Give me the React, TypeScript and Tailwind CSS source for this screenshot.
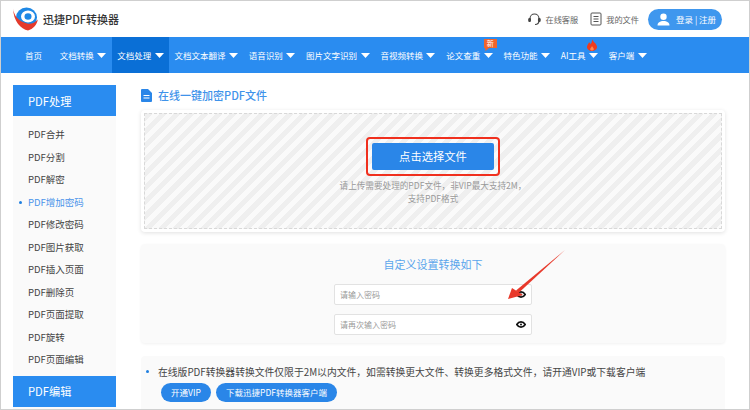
const font = { fontFamily: '"Noto Sans CJK SC", "Liberation Sans", sans-serif' };

function Caret() {
  return (
    <svg width="9" height="5" viewBox="0 0 9 5" className="shrink-0">
      <path d="M0 0H9L4.5 5Z" fill="#fff" />
    </svg>
  );
}

function Logo() {
  return (
    <svg width="25" height="24" viewBox="0 0 25 24" className="shrink-0">
      <ellipse cx="13.500" cy="10.500" rx="10.500" ry="10" fill="#1e88e5" />
      <ellipse cx="15" cy="9.500" rx="7" ry="6" fill="#fff" />
      <ellipse cx="15" cy="9.500" rx="3.500" ry="3.200" fill="#1e88e5" />
      <path d="M0.300 1.500C0.500 7 4 14 14 16.500 18 17.300 22 16 24.800 12.500 24 18 20 22 15 23.500 8 22 0 14 0.300 1.500Z" fill="#e53a2b" />
    </svg>
  );
}

function NavItem({ label, active, caret = true, children }: { label: string; active?: boolean; caret?: boolean; children?: React.ReactNode }) {
  return (
    <div className={`relative flex h-full items-center gap-[3.5px] pl-[5.5px] pr-[5.3px] ${active ? "bg-[#0a6fd6]" : ""}`}>
      <span className="whitespace-nowrap text-[8.5px] leading-none text-white">{label}</span>
      {caret && <Caret />}
      {children}
    </div>
  );
}

function SideItem({ label, active }: { label: string; active?: boolean }) {
  return (
    <div className={`relative h-[22.5px] pl-[15px] text-[9.5px] leading-[22.5px] ${active ? "text-[#4a94ea]" : "text-[#444]"}`}>
      {active && <span className="absolute left-[6px] top-[10px] size-[3px] rounded-full bg-[#1f7fe0]" />}
      {label}
    </div>
  );
}

function Eye() {
  return (
    <svg width="10" height="7" viewBox="0 0 10 7" className="shrink-0">
      <path d="M0.800 3.500C2 1.500 3.500 0.900 5 0.900S8 1.500 9.200 3.500C8 5.500 6.500 6.100 5 6.100S2 5.500 0.800 3.500Z" fill="none" stroke="#111" strokeWidth="1.700" />
      <circle cx="5" cy="3.500" r="1" fill="#111" />
    </svg>
  );
}

function PwInput({ placeholder }: { placeholder: string }) {
  return (
    <div className="flex h-[21px] w-[198px] items-center justify-between rounded-[2px] border border-[#e2e2e2] bg-white pl-[5px] pr-[5px]">
      <span className="text-[8px] text-[#999]">{placeholder}</span>
      <Eye />
    </div>
  );
}

const sideItems = ["PDF合并", "PDF分割", "PDF解密", "PDF增加密码", "PDF修改密码", "PDF图片获取", "PDF插入页面", "PDF删除页", "PDF页面提取", "PDF旋转", "PDF页面编辑"];

export default function App() {
  return (
    <div style={font} className="relative h-[410px] w-[750px] overflow-hidden border border-[#cfcfcf] bg-white">
      <header className="flex h-[36px] items-center pl-[12px] pr-[27px]">
        <Logo />
        <span className="ml-[5px] text-[11px] font-medium text-[#333]">迅捷PDF转换器</span>
        <div className="ml-auto flex items-center">
          <svg width="13" height="13" viewBox="0 0 13 13" fill="none" stroke="#444" strokeWidth="1.100">
            <path d="M2 7V5.500a4.500 4.500 0 0 1 9 0V7" />
            <path d="M11 7.500C11 10 9.500 11.500 7 11.500" />
            <rect x="0.800" y="5.500" width="1.600" height="3" rx="0.700" fill="#444" />
            <rect x="10.500" y="5.500" width="1.600" height="3" rx="0.700" fill="#444" />
          </svg>
          <span className="ml-[4px] text-[8.2px] text-[#666]">在线客服</span>
          <svg width="12" height="14" viewBox="0 0 12 14" fill="none" stroke="#555" strokeWidth="1" className="ml-[12px]">
            <rect x="1" y="1" width="10" height="12" rx="1" />
            <path d="M3.500 4.500H8.500M3.500 7H8.500M3.500 9.500H8.500" />
          </svg>
          <span className="ml-[4px] text-[8.2px] text-[#666]">我的文件</span>
          <div className="ml-[9px] flex h-[21px] w-[74px] items-center rounded-full bg-[#3f97ee] pl-[9px]">
            <svg width="13" height="13" viewBox="0 0 13 13" fill="#fff">
              <circle cx="6.500" cy="3.700" r="3.200" />
              <path d="M0.500 12.500C0.500 9.500 3 8 6.500 8S12.500 9.500 12.500 12.500Z" />
            </svg>
            <span className="ml-[6px] whitespace-nowrap text-[8.5px] text-white">登录 | 注册</span>
          </div>
        </div>
      </header>

      <nav className="flex h-[36px] items-center bg-[#2a8cf0] pl-[18.5px]">
        <NavItem label="首页" caret={false} />
        <div className="w-[7px]" />
        <NavItem label="文档转换" />
        <NavItem label="文档处理" active />
        <NavItem label="文档文本翻译" />
        <NavItem label="语音识别" />
        <NavItem label="图片文字识别" />
        <NavItem label="音视频转换" />
        <NavItem label="论文查重">
          <span className="absolute left-[43px] top-[2px] flex h-[9px] w-[13px] items-center justify-center bg-[#f0642c] text-[7px] leading-none text-white">新</span>
          <svg width="4" height="3" viewBox="0 0 4 3" className="absolute left-[44px] top-[11px]">
            <path d="M0 0H4L0.500 3Z" fill="#f0642c" />
          </svg>
        </NavItem>
        <NavItem label="特色功能" />
        <NavItem label="AI工具">
          <svg width="10" height="12" viewBox="0 0 10 12" className="absolute left-[32px] top-[2px]">
            <path d="M5 0C5.500 2.500 10 4.500 10 8 10 10.300 7.800 12 5 12S0 10.300 0 8C0 6 1.500 5 2 3.200 3 3.700 3.500 4.700 3.500 5.500 4.500 4 5.300 2.300 5 0Z" fill="#ee3b1d" />
            <path d="M5 7C5.800 8.300 6.800 9 6.800 10.200 6.800 11.100 6 11.600 5 11.600S3.200 11.100 3.200 10.200C3.200 9 4.500 8.300 5 7Z" fill="#ff8a50" />
          </svg>
        </NavItem>
        <NavItem label="客户端" />
      </nav>

      <div className="flex pl-[12px] pt-[12px]">
        <aside className="w-[103px] shrink-0 bg-[#fafafa]">
          <div className="flex h-[31px] items-center bg-[#2a8cf0] pl-[15px] pt-[1px] text-[11.2px] text-white">PDF处理</div>
          <div className="pb-[5px] pt-[7px]">
            {sideItems.map((s) => (
              <SideItem key={s} label={s} active={s === "PDF增加密码"} />
            ))}
          </div>
          <div className="flex h-[31px] items-center bg-[#2a8cf0] pl-[15px] pt-[1px] text-[11.2px] text-white">PDF编辑</div>
        </aside>

        <main className="ml-[25px] w-[584px] shrink-0">
          <div className="mt-[3px] flex h-[14px] items-center">
            <svg width="11" height="13" viewBox="0 0 11 13" className="shrink-0">
              <path d="M0 1a1 1 0 0 1 1-1H7L11 4V12a1 1 0 0 1-1 1H1a1 1 0 0 1-1-1Z" fill="#2a86e8" />
              <path d="M2.500 6.500H8.500M2.500 9H8.500" stroke="#fff" strokeWidth="1.100" />
            </svg>
            <span className="ml-[6px] text-[11px] font-medium text-[#3f93ea]">在线一键加密PDF文件</span>
          </div>

          <section className="mt-[8px] h-[122px] rounded-[4px] bg-white p-[3px] shadow-[0_1px_4px_rgba(0,0,0,0.12)]">
            <div className="flex h-full flex-col items-center border border-dashed border-[#d8d8d8] bg-[repeating-linear-gradient(135deg,#efefef_0,#efefef_5px,#fafafa_5px,#fafafa_10px)]">
              <div className="mt-[23px] rounded-[4px] border-2 border-[#f0301e] p-[4px]">
                <div className="flex h-[27px] w-[122px] items-center justify-center rounded-[2px] bg-[#2a86e8] text-[11.3px] text-white">点击选择文件</div>
              </div>
              <p className="mt-[3px] whitespace-nowrap text-center text-[8.6px] leading-[12.5px] text-[#999]">
                请上传需要处理的PDF文件，非VIP最大支持2M，
                <br />
                支持PDF格式
              </p>
            </div>
          </section>

          <section className="mt-[12px] flex h-[99px] flex-col items-center rounded-[4px] bg-[#fafafa] pt-[12px] shadow-[0_1px_3px_rgba(0,0,0,0.06)]">
            <div className="text-[11px] leading-[16px] text-[#5ba6ec]">自定义设置转换如下</div>
            <div className="mt-[12px]"><PwInput placeholder="请输入密码" /></div>
            <div className="mt-[9px]"><PwInput placeholder="请再次输入密码" /></div>
          </section>

          <section className="relative mt-[13px] h-[60px] rounded-[4px] bg-[#fafafa] pl-[17px] pt-[9px]">
            <span className="absolute left-[5px] top-[14px] size-[3px] rounded-full bg-[#1f7fe0]" />
            <p className="whitespace-nowrap text-[9.8px] leading-[14px] text-[#444]">在线版PDF转换器转换文件仅限于2M以内文件，如需转换更大文件、转换更多格式文件，请开通VIP或下载客户端</p>
            <div className="ml-[3px] mt-[4px] flex gap-[5px]">
              <span className="flex h-[19px] w-[50px] items-center justify-center rounded-full bg-[#2a86e8] text-[8.5px] text-white">开通VIP</span>
              <span className="flex h-[19px] w-[121px] items-center justify-center rounded-full bg-[#2a86e8] text-[8.5px] text-white">下载迅捷PDF转换器客户端</span>
            </div>
          </section>
        </main>
      </div>

      <svg width="60" height="60" viewBox="0 0 60 60" className="absolute left-[505px] top-[249px]">
        <path d="M59 0 L10 40.500 L12.500 43 Z" fill="#e8392b" />
        <path d="M2 49 L6 38 L17 45 Z" fill="#e8392b" />
      </svg>
    </div>
  );
}
